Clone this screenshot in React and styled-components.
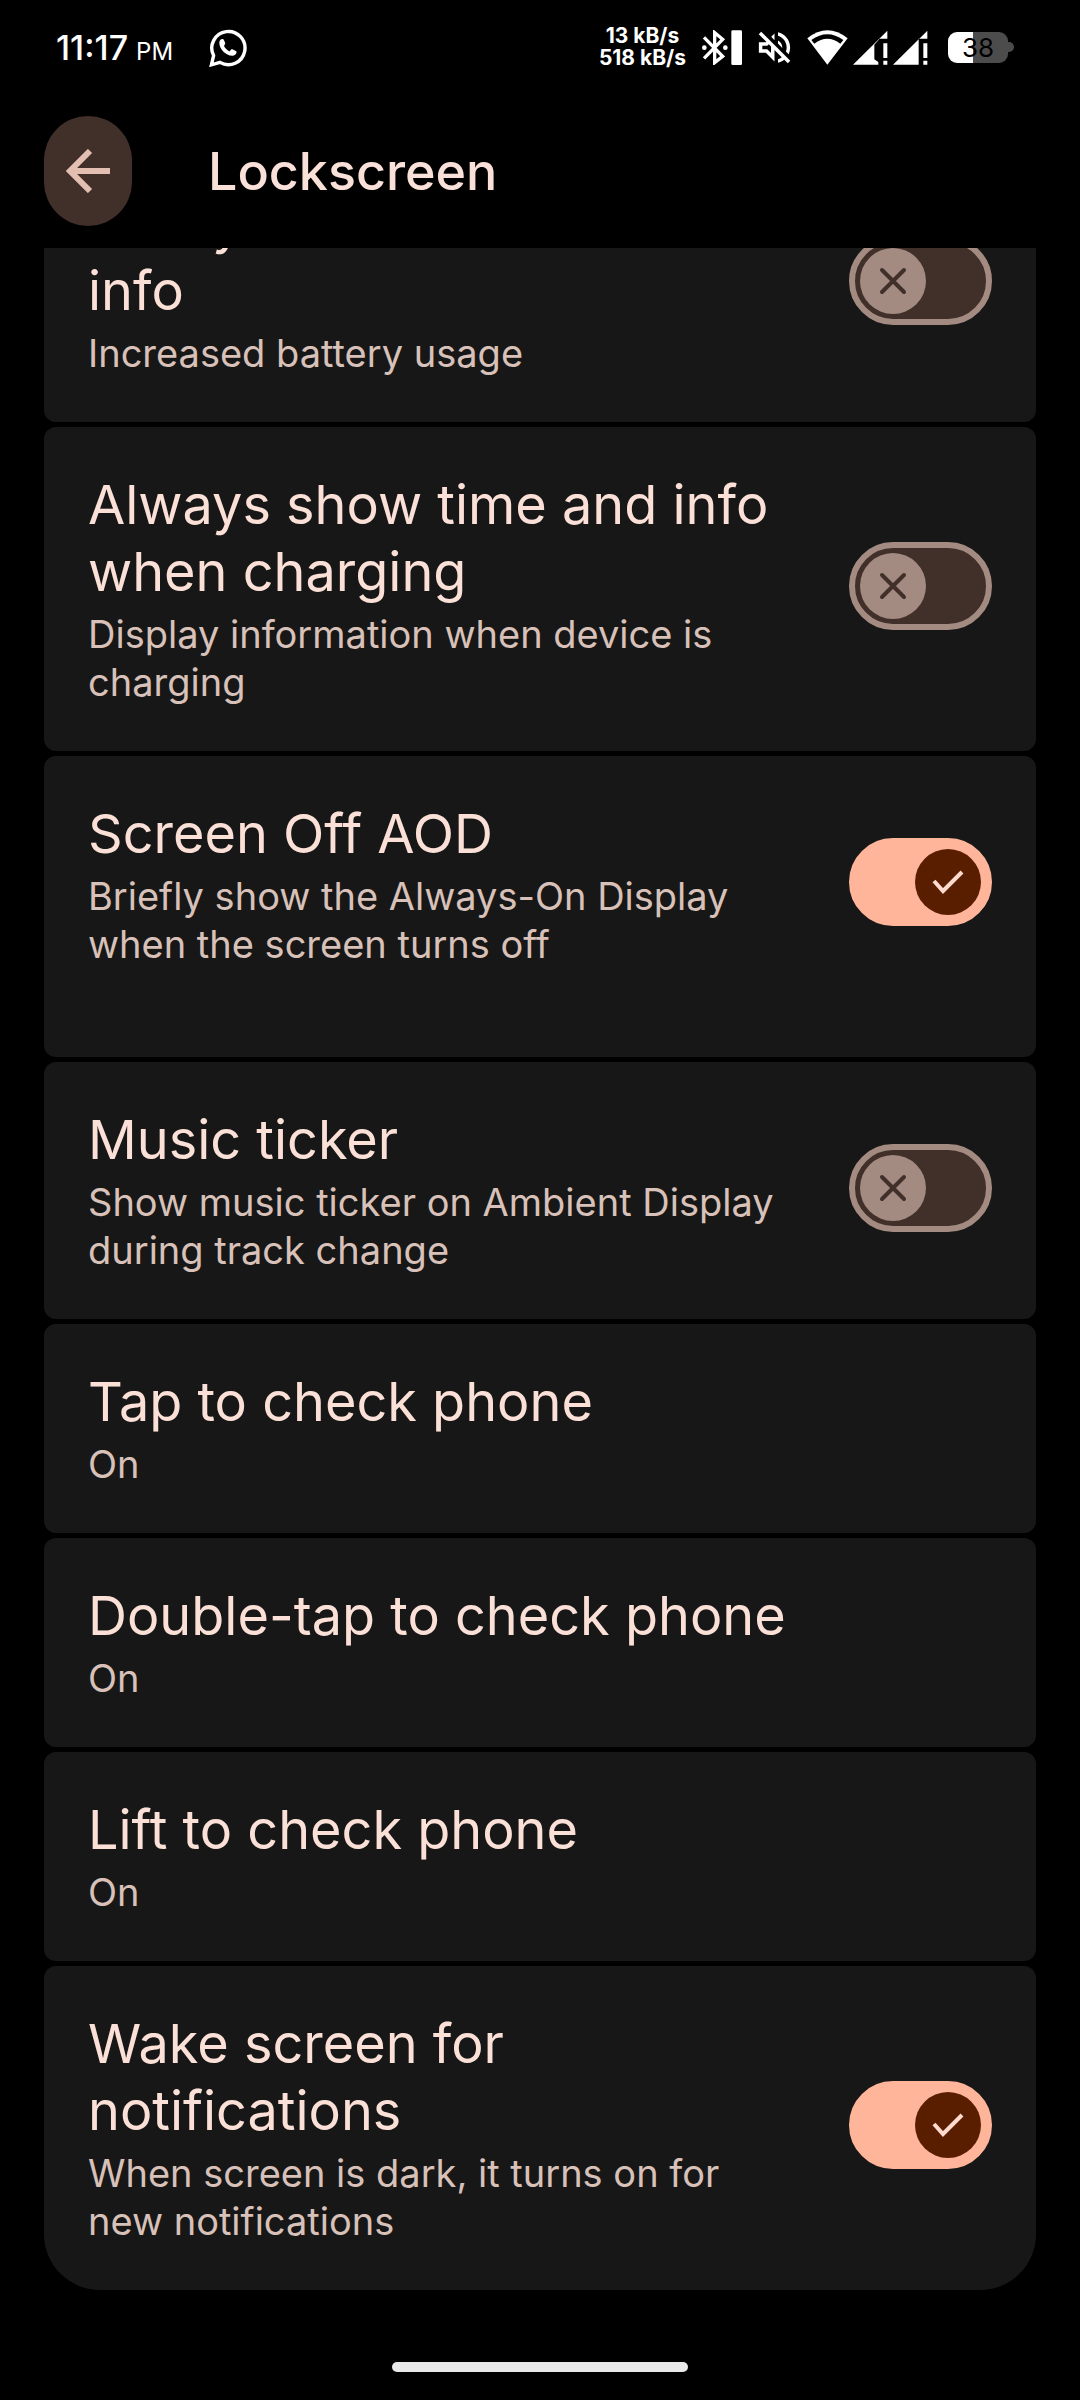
import { useLayoutEffect, useRef, useState } from "react";
import styled, { createGlobalStyle } from "styled-components";

const GlobalStyle = createGlobalStyle`
  *, *::before, *::after {
    box-sizing: border-box;
  }
  body {
    margin: 0;
    background: #000;
    color: #fff;
    font-family: Inter, "Liberation Sans", sans-serif;
  }
`;

const Screen = styled.div`
  display: flex;
  flex-direction: column;
  height: 100vh;
`;

const StatusBar = styled.div`
  display: flex;
  align-items: center;
  flex: none;
  height: 94px;
  padding: 0 66px 0 56px;
`;

const Clock = styled.div`
  font-size: 34px;
  font-weight: 500;
  margin-right: 36px;
  small {
    font-size: 24px;
    font-weight: 400;
    margin-left: 8px;
  }
`;

const StatusIcons = styled.div`
  display: flex;
  align-items: center;
  gap: 16px;
  margin-left: auto;
`;

const IconPair = styled.div`
  display: flex;
  align-items: center;
  gap: 5px;
`;

const NetSpeed = styled.div`
  font-size: 21px;
  font-weight: 700;
  line-height: 22px;
  text-align: center;
`;

const Battery = styled.div`
  display: flex;
  align-items: center;
  margin-left: 4px;
  &::after {
    content: "";
    width: 6px;
    height: 10px;
    border-radius: 0 6px 6px 0;
    background: #4c4c4c;
  }
`;

const BatteryLevel = styled.div`
  width: 60px;
  height: 31px;
  border-radius: 9px;
  background: linear-gradient(to right, #fff 42%, #4c4c4c 42%);
  color: #000;
  font-size: 26px;
  line-height: 31px;
  text-align: center;
`;

const Header = styled.header`
  display: flex;
  align-items: center;
  flex: none;
  gap: 76px;
  height: 154px;
  padding: 0 44px;
`;

const BackButton = styled.button`
  display: flex;
  align-items: center;
  justify-content: center;
  width: 88px;
  height: 110px;
  padding: 0;
  border: 0;
  border-radius: 44px;
  background: #412f2a;
  color: #e3bfb2;
`;

const PageTitle = styled.h1`
  margin: 0;
  color: #f9e0d8;
  font-size: 52px;
  font-weight: 500;
  line-height: 67px;
`;

const Scroller = styled.main`
  flex: 1;
  min-height: 0;
  overflow-y: auto;
  scrollbar-width: none;
  padding: 0 44px;
`;

const List = styled.div`
  display: flex;
  flex-direction: column;
  gap: 5px;
  > :first-child {
    border-radius: 56px 56px 12px 12px;
  }
  > :last-child {
    border-radius: 12px 12px 56px 56px;
  }
`;

const Row = styled.label`
  display: flex;
  align-items: center;
  justify-content: space-between;
  gap: 56px;
  width: 100%;
  padding: 44px 44px 45px;
  border: 0;
  border-bottom: ${(props) => (props.$spare ? "44px solid #171717" : "0")};
  border-radius: 12px;
  background: #171717;
  font-family: inherit;
  text-align: left;
`;

const RowText = styled.span`
  display: flex;
  flex-direction: column;
  gap: 5px;
  max-width: ${(props) => (props.$narrow ? "620px" : "none")};
`;

const RowTitle = styled.span`
  color: #fbe0d7;
  font-size: 54px;
  line-height: 67px;
`;

const RowSummary = styled.span`
  color: #d8c1b9;
  font-size: 38px;
  line-height: 48px;
`;

const SwitchBox = styled.span`
  display: grid;
  flex: none;
  align-items: center;
  margin-bottom: 5px;
  > * {
    grid-area: 1 / 1;
  }
`;

const SwitchInput = styled.input`
  appearance: none;
  width: 143px;
  height: 88px;
  margin: 0;
  border: 6px solid #a48b81;
  border-radius: 44px;
  background: #412f2a;
  &:checked {
    border-color: #ffb59a;
    background: #ffb59a;
  }
`;

const Thumb = styled.svg`
  width: 66px;
  height: 66px;
  margin: 0 11px;
  border-radius: 50%;
  justify-self: ${(props) => (props.$on ? "end" : "start")};
  background: ${(props) => (props.$on ? "#591d00" : "#a48b81")};
  color: ${(props) => (props.$on ? "#ffdbcf" : "#412f2a")};
  pointer-events: none;
`;

const NavBar = styled.footer`
  display: flex;
  justify-content: center;
  flex: none;
  height: 110px;
  padding-top: 72px;
`;

const NavHandle = styled.div`
  width: 296px;
  height: 10px;
  border-radius: 5px;
  background: #e9e9e9;
`;

const settings = [
  {
    title: "Always show time and info",
    summary: "Increased battery usage",
    on: false,
    narrow: true,
  },
  {
    title: "Always show time and info when charging",
    summary: "Display information when device is charging",
    on: false,
  },
  {
    title: "Screen Off AOD",
    summary: "Briefly show the Always-On Display when the screen turns off",
    on: true,
    spare: true,
  },
  {
    title: "Music ticker",
    summary: "Show music ticker on Ambient Display during track change",
    on: false,
  },
  { title: "Tap to check phone", summary: "On" },
  { title: "Double-tap to check phone", summary: "On" },
  { title: "Lift to check phone", summary: "On" },
  {
    title: "Wake screen for notifications",
    summary: "When screen is dark, it turns on for new notifications",
    on: true,
  },
];

const WhatsappIcon = () => (
  <svg width="38" height="39" viewBox="0 0 38 39" fill="none">
    <path
      d="M2.4 36.8L4.6 27.6A16.6 16.6 0 1 1 11 34.4Z"
      stroke="#fff"
      strokeWidth="3.4"
    />
    <path
      transform="translate(7 7.5)"
      fill="#fff"
      d="M8 10.6c1.2 2.3 3.1 4.200 5.400 5.400l1.700-1.900c.4-.4.9-.5 1.400-.3l3.300 1.600c.6.3.9.8.8 1.400-.4 2.100-2.200 3.600-4.300 3.500C9.600 20 3.700 14 3.300 7.500 3.200 5.600 4.200 4 5.900 3.500c.8-.2 1.500-.1 1.900.7l1.300 3.100c.2.5.1 1-.2 1.400z"
    />
  </svg>
);

const BluetoothIcon = () => (
  <svg width="40" height="35" viewBox="370 86 120 105" fill="none">
    <path
      d="M376 108L432 165L408 184V94L432 114L376 171"
      stroke="#fff"
      strokeWidth="10"
    />
    <circle cx="377" cy="139" r="7" fill="#fff" />
    <circle cx="440" cy="139" r="7" fill="#fff" />
    <rect x="458" y="87" width="32" height="104" rx="4" fill="#fff" />
  </svg>
);

const MuteIcon = () => (
  <svg width="33" height="33" viewBox="2.5 2.5 19 19" fill="#fff">
    <path d="M4.34 2.93L2.93 4.34 7.29 8.7 7 9H3v6h4l5 5v-6.59l4.18 4.18c-.65.49-1.38.88-2.18 1.11v2.06c1.34-.3 2.57-.92 3.61-1.75l2.05 2.05 1.41-1.41L4.34 2.93zM10 15.17L7.83 13H5v-2h2.83l.88-.88L10 11.41v3.76zM19 12c0 .82-.15 1.61-.41 2.34l1.53 1.53c.56-1.17.88-2.48.88-3.87 0-4.28-2.99-7.86-7-8.77v2.06c2.89.86 5 3.54 5 6.71zm-7-8l-1.88 1.88L12 7.76V4zm4.5 8c0-1.77-1.02-3.29-2.5-4.03v1.79l2.48 2.48c.01-.08.02-.16.02-.24z" />
  </svg>
);

const WifiIcon = () => (
  <svg width="41" height="35" viewBox="684 87 123 105">
    <path d="M685 112Q745 64 806 112L745 191Z" fill="#fff" />
    <path d="M697 117Q745 82 793 117L784 128Q745 98 706 128Z" fill="#000" />
  </svg>
);

const SignalIcon = ({ weak }) => (
  <svg width="35" height="35" viewBox="0 0 105 105" fill="#fff">
    <path
      d={
        weak
          ? "M0 104L103 2V26H80L64 44V88L76 96V104Z"
          : "M0 104L103 2V26H77V104Z"
      }
    />
    <path d="M91 40H103V84H91ZM91 92H103V104H91Z" />
  </svg>
);

const Switch = ({ id, on, onChange }) => (
  <SwitchBox>
    <SwitchInput
      type="checkbox"
      role="switch"
      id={id}
      checked={on}
      onChange={onChange}
    />
    <Thumb
      $on={on}
      viewBox="0 0 66 66"
      fill="none"
      stroke="currentColor"
      strokeWidth="4"
    >
      {on ? (
        <path d="M19 32L28 42L47 23" />
      ) : (
        <path d="M22 22L44 44M44 22L22 44" strokeLinecap="round" />
      )}
    </Thumb>
  </SwitchBox>
);

const SettingRow = ({ id, item }) => {
  const [on, setOn] = useState(item.on);
  const hasSwitch = item.on !== undefined;

  return (
    <Row
      as={hasSwitch ? "label" : "button"}
      htmlFor={hasSwitch ? id : undefined}
      $spare={item.spare}
    >
      <RowText $narrow={item.narrow}>
        <RowTitle>{item.title}</RowTitle>
        <RowSummary>{item.summary}</RowSummary>
      </RowText>
      {hasSwitch && <Switch id={id} on={on} onChange={() => setOn(!on)} />}
    </Row>
  );
};

const App = () => {
  const scroller = useRef(null);

  // open at the end of the list
  useLayoutEffect(() => {
    scroller.current.scrollTop = scroller.current.scrollHeight;
  }, []);

  return (
    <Screen>
      <GlobalStyle />
      <StatusBar>
        <Clock>
          11:17<small>PM</small>
        </Clock>
        <WhatsappIcon />
        <StatusIcons>
          <NetSpeed>
            13 kB/s
            <br />
            518 kB/s
          </NetSpeed>
          <BluetoothIcon />
          <MuteIcon />
          <IconPair>
            <WifiIcon />
            <SignalIcon weak />
            <SignalIcon />
          </IconPair>
          <Battery>
            <BatteryLevel>38</BatteryLevel>
          </Battery>
        </StatusIcons>
      </StatusBar>
      <Header>
        <BackButton aria-label="Back">
          <svg
            width="44"
            height="44"
            viewBox="0 0 44 44"
            fill="none"
            stroke="currentColor"
            strokeWidth="6"
          >
            <path d="M44 22H5M24 2L4 22L24 42" />
          </svg>
        </BackButton>
        <PageTitle>Lockscreen</PageTitle>
      </Header>
      <Scroller ref={scroller}>
        <List>
          {settings.map((item, index) => (
            <SettingRow key={index} id={`setting-${index}`} item={item} />
          ))}
        </List>
      </Scroller>
      <NavBar>
        <NavHandle />
      </NavBar>
    </Screen>
  );
};

export default App;
